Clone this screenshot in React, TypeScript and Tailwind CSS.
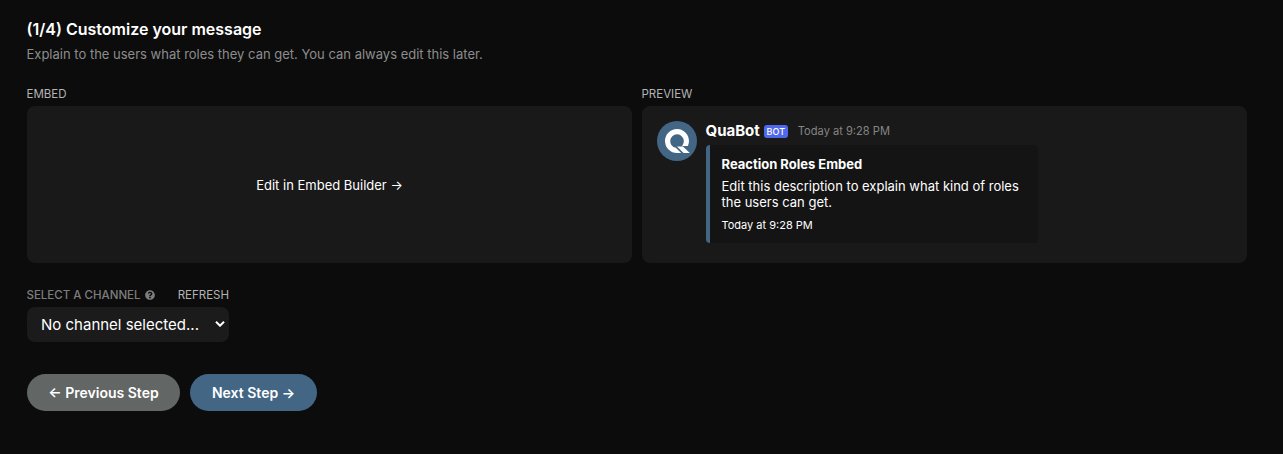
import { FaQuestionCircle } from "react-icons/fa";

function Avatar() {
  return (
    <svg viewBox="0 0 40 40" className="size-10 shrink-0" aria-hidden="true">
      <circle cx="20" cy="20" r="20" fill="#426684" />
      <path
        d="M20 8a12 12 0 0 0 0 24h4.200l-5.400-5.200A6.800 6.800 0 1 1 26.800 20c0 1.600-.5 3-1.300 4.200l-.5.8h5.900A12 12 0 0 0 20 8Z"
        fill="#fff"
      />
      <path d="M20 25.600h6l6.800 6.400h-6.200Z" fill="#fff" />
    </svg>
  );
}

function Message() {
  return (
    <div className="flex h-[157px] gap-[9px] rounded-lg bg-[#191919] p-[15px]">
      <Avatar />
      <div>
        <div className="flex h-[24px] items-center whitespace-nowrap pb-1">
          <span className="-ml-[0.5px] text-[15px] font-bold leading-5">QuaBot</span>
          <span className="ml-1 h-[13px] w-6 rounded-[3px] bg-[#5069eb] text-center text-[9px] font-medium leading-[13px]">
            BOT
          </span>
          <span className="ml-[10px] text-[11.100px] leading-5 text-[#858585]">Today at 9:28 PM</span>
        </div>
        <div className="h-[98px] w-[332px] rounded-[4px] border-l-4 border-[#426684] bg-[#141414] pl-[11.500px] pt-[11px]">
          <div className="text-[13px] font-bold leading-4">Reaction Roles Embed</div>
          <p className="mt-[6px] text-[13px] leading-4">
            Edit this description to explain what kind of roles
            <br />
            the users can get.
          </p>
          <div className="mt-[7px] text-[11px] leading-4">Today at 9:28 PM</div>
        </div>
      </div>
    </div>
  );
}

export default function App() {
  return (
    <main className="h-screen overflow-hidden bg-[#0c0c0c] px-[27px] pt-[17px] font-['Inter',sans-serif] text-white">
      <h1 className="-ml-[0.5px] text-[16px] font-semibold leading-6">(1/4) Customize your message</h1>
      <p className="-ml-[0.5px] mt-px text-[13px] leading-6 text-[#8c8c8c]">
        Explain to the users what roles they can get. You can always edit this later.
      </p>

      <div className="mt-5 flex gap-[10px]">
        <section className="w-[605px]">
          <h2 className="-ml-[0.5px] text-[11.500px] leading-4 text-[#b3b3b3]">EMBED</h2>
          <button className="mt-1 flex h-[157px] w-full items-center justify-center rounded-lg bg-[#191919] pt-0.5 text-[13px]">
            Edit in Embed Builder →
          </button>
        </section>
        <section className="w-[605px]">
          <h2 className="-ml-[0.5px] mb-1 text-[11.500px] leading-4 text-[#b3b3b3]">PREVIEW</h2>
          <Message />
        </section>
      </div>

      <div className="mt-6 w-[202px]">
        <div className="-ml-[0.5px] flex items-center whitespace-nowrap text-[11.500px] leading-4 text-[#7d7d7d]">
          <label htmlFor="channel" className="font-medium">SELECT A CHANNEL</label>
          <FaQuestionCircle className="ml-1 size-[10px]" />
          <button className="ml-auto text-[#b3b3b3]">REFRESH</button>
        </div>
        <div className="relative mt-1">
          <select
            id="channel"
            className="block h-[35px] w-full appearance-none rounded-lg bg-[#1b1b1b] pl-[14px] pt-0.5 text-[15px] text-white outline-none"
          >
            <option>No channel selected...</option>
          </select>
          <svg
            viewBox="0 0 10 6"
            className="pointer-events-none absolute right-1 top-[14px] h-[6px] w-[10px]"
            fill="none"
            stroke="#fff"
            strokeWidth="2"
          >
            <path d="m1 .7 4 4 4-4" />
          </svg>
        </div>
      </div>

      <div className="mt-8 flex gap-[10px] whitespace-nowrap text-[14px] font-semibold">
        <button className="h-[37px] w-[153px] rounded-full bg-[#626664]">← Previous Step</button>
        <button className="h-[37px] w-[127px] rounded-full bg-[#426684]">Next Step →</button>
      </div>
    </main>
  );
}
